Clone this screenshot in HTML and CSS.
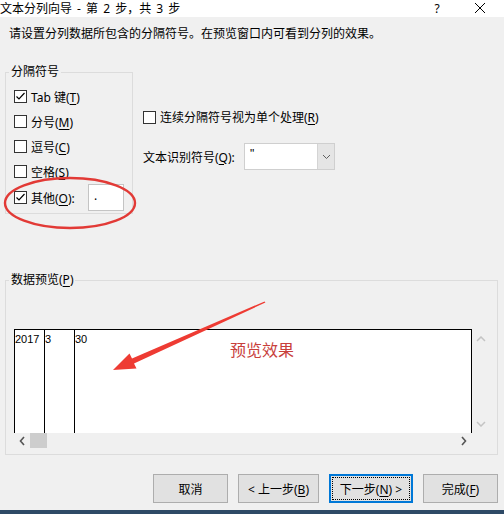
FILE: index.html
```html
<!DOCTYPE html>
<html lang="zh-CN">
<head>
    <meta charset="UTF-8">
    <title>文本分列向导</title>
    <link rel="stylesheet" href="styles.css">
</head>
<body>
    <div class="titlebar">
        <span class="title">文本分列向导 - 第 2 步，共 3 步</span>
        <span class="help">?</span>
        <svg class="close" width="12" height="12" viewBox="0 0 12 12"><path d="M1 1 L11 11 M11 1 L1 11" stroke="#000" stroke-width="1" fill="none"/></svg>
    </div>

    <p class="intro">请设置分列数据所包含的分隔符号。在预览窗口内可看到分列的效果。</p>

    <div class="options">
        <fieldset class="group delimiters">
            <legend>分隔符号</legend>
            <div class="rows">
                <div class="check-row"><span class="box checked"><svg width="11" height="11" viewBox="0 0 11 11"><path d="M1.5 5.5 L4 8 L9.5 2" stroke="#000" stroke-width="1.2" fill="none"/></svg></span><span>Tab 键(<u>T</u>)</span></div>
                <div class="check-row"><span class="box"></span><span>分号(<u>M</u>)</span></div>
                <div class="check-row"><span class="box"></span><span>逗号(<u>C</u>)</span></div>
                <div class="check-row"><span class="box"></span><span>空格(<u>S</u>)</span></div>
                <div class="check-row other"><span class="box checked"><svg width="11" height="11" viewBox="0 0 11 11"><path d="M1.5 5.5 L4 8 L9.5 2" stroke="#000" stroke-width="1.2" fill="none"/></svg></span><span class="other-label">其他(<u>O</u>):</span><span class="other-input">.</span></div>
            </div>
        </fieldset>

        <div class="side">
            <div class="check-row single"><span class="box"></span><span>连续分隔符号视为单个处理(<u>R</u>)</span></div>
            <div class="qualifier">
                <span class="q-label">文本识别符号(<u>Q</u>):</span>
                <div class="combo">
                    <span class="combo-value">"</span>
                    <span class="combo-btn"><svg width="9" height="6" viewBox="0 0 9 6"><path d="M1 1 L4.5 4.5 L8 1" stroke="#606060" stroke-width="1" fill="none"/></svg></span>
                </div>
            </div>
        </div>
    </div>

    <fieldset class="group preview-group">
        <legend>数据预览(<u>P</u>)</legend>
        <div class="preview-wrap">
            <div class="preview">
                <div class="sheet">
                    <div class="col">2017</div>
                    <div class="col">3</div>
                    <div class="col wide">30</div>
                </div>
                <div class="vscroll">
                    <svg width="10" height="6" viewBox="0 0 10 6"><path d="M1 5 L5 1 L9 5" stroke="#c4c4c4" stroke-width="1.5" fill="none"/></svg>
                    <svg width="10" height="6" viewBox="0 0 10 6"><path d="M1 1 L5 5 L9 1" stroke="#c4c4c4" stroke-width="1.5" fill="none"/></svg>
                </div>
                <div class="hscroll">
                    <span class="arrow"><svg width="6" height="10" viewBox="0 0 6 10"><path d="M5 1 L1.5 5 L5 9" stroke="#555" stroke-width="1.6" fill="none"/></svg></span>
                    <span class="thumb"></span>
                    <span class="track"></span>
                    <span class="arrow"><svg width="6" height="10" viewBox="0 0 6 10"><path d="M1 1 L4.5 5 L1 9" stroke="#555" stroke-width="1.6" fill="none"/></svg></span>
                </div>
                <div class="corner"></div>
            </div>
        </div>
    </fieldset>

    <div class="buttons">
        <button class="btn cancel">取消</button>
        <button class="btn back">&lt; 上一步(<u>B</u>)</button>
        <button class="btn next">下一步(<u>N</u>) &gt;</button>
        <button class="btn finish">完成(<u>F</u>)</button>
    </div>
    <div class="frame-line"></div>

    <!-- red markup drawn on top of the dialog -->
    <svg class="markup" width="504" height="514" viewBox="0 0 504 514">
        <ellipse cx="70" cy="203" rx="65" ry="25" stroke="#e23a36" stroke-width="2.4" fill="none"/>
        <polygon points="264.6,301.4 132,358.4 129.5,353.5 113,370 136.5,368.5 134,363.4 265.4,302.6" fill="#ee3b33"/>
    </svg>
    <span class="note">预览效果</span>
</body>
</html>
```

FILE: styles.css
```css
body {
    margin: 0;
    width: 504px;
    height: 514px;
    overflow: hidden;
    position: relative;
    background-color: #f0f0f0;
    font-family: "Noto Sans", "Noto Sans CJK SC", sans-serif;
    font-size: 12px;
    color: #000;
}

u {
    text-decoration-thickness: 1px;
    text-underline-offset: 2px;
}

.titlebar {
    height: 17px;
    box-sizing: border-box;
    padding-top: 1px;
    background-color: #fff;
    display: flex;
    align-items: flex-start;
    line-height: 15px;
}

.title {
    flex: 1;
    word-spacing: 2px;
}

.help {
    width: 8px;
    text-align: center;
    margin-right: 33px;
}

.close {
    margin-top: 1px;
    margin-right: 18px;
}

.intro {
    margin: 0;
    padding: 9px 0 0 9px;
    line-height: 16px;
}

.group {
    margin: 0 0 0 5px;
    padding: 0;
    min-width: 0;
    border: 1px solid #dcdcdc;
    box-sizing: border-box;
}

.group legend {
    margin-left: 3px;
    padding: 0 2px;
    line-height: 16px;
}

.options {
    display: flex;
    margin-top: 22px;
    height: 150px;
}

.delimiters {
    width: 128px;
}

.rows {
    padding: 4px 0 2px 8px;
}

.check-row {
    display: flex;
    align-items: center;
    gap: 4px;
    height: 25px;
    white-space: nowrap;
}

.check-row.other {
    height: 27px;
}

.box {
    width: 13px;
    height: 13px;
    box-sizing: border-box;
    border: 1px solid #333;
    background-color: #fff;
    display: flex;
    align-items: center;
    justify-content: center;
    flex-shrink: 0;
}

.other-label {
    width: 53px;
}

.other-input {
    width: 36px;
    height: 27px;
    box-sizing: border-box;
    border: 1px solid #c4c4c4;
    background-color: #fff;
    padding-left: 5px;
    line-height: 22px;
}

.side {
    margin-left: 10px;
    padding-top: 45px;
}

.check-row.single {
    height: 16px;
}

.qualifier {
    display: flex;
    align-items: center;
    height: 27px;
    margin-top: 18px;
}

.q-label {
    width: 101px;
    white-space: nowrap;
}

.combo {
    width: 91px;
    height: 27px;
    box-sizing: border-box;
    border: 1px solid #cfcfcf;
    background-color: #fff;
    display: flex;
}

.combo-value {
    flex: 1;
    padding-left: 5px;
    line-height: 20px;
    font-family: "Liberation Sans", sans-serif;
}

.combo-btn {
    width: 16px;
    background-color: #e5e5e5;
    border-left: 1px solid #d4d4d4;
    display: flex;
    align-items: center;
    justify-content: center;
}

.preview-group {
    width: 493px;
    margin-top: 58px;
}

.preview-wrap {
    padding: 41px 0 6px 8px;
}

.preview {
    display: grid;
    grid-template-columns: 458px 16px;
    grid-template-rows: 104px 15px;
}

.sheet {
    background-color: #fff;
    border: 1px solid #000;
    border-bottom: none;
    display: flex;
    font-family: "Liberation Sans", sans-serif;
    font-size: 11px;
    line-height: 14px;
}

.col {
    width: 30px;
    box-sizing: border-box;
    border-right: 1px solid #000;
    padding-top: 2px;
}

.col.wide {
    flex: 1;
    border-right: none;
}

.vscroll {
    display: flex;
    flex-direction: column;
    justify-content: space-between;
    align-items: center;
    padding: 7px 0 6px 1px;
}

.hscroll {
    display: flex;
    align-items: stretch;
}

.arrow {
    width: 16px;
    display: flex;
    align-items: center;
    justify-content: center;
}

.thumb {
    width: 17px;
    background-color: #cdcdcd;
}

.track {
    flex: 1;
}

.buttons {
    display: flex;
    justify-content: flex-end;
    gap: 10px;
    margin-top: 19px;
    padding-right: 6px;
}

.btn {
    height: 29px;
    padding: 0;
    background-color: #e1e1e1;
    border: 1px solid #adadad;
    font-family: "Noto Sans", "Noto Sans CJK SC", sans-serif;
    font-size: 12px;
    color: #000;
}

.cancel,
.finish {
    width: 75px;
}

.back {
    width: 81px;
}

.next {
    width: 84px;
    border: 2px solid #0078d7;
    outline: 1px dotted #000;
    outline-offset: -4px;
}

.frame-line {
    height: 4px;
    margin-top: 7px;
    background-color: #2e4a66;
}

.markup {
    position: absolute;
    top: 0;
    left: 0;
    pointer-events: none;
}

.note {
    position: absolute;
    left: 230px;
    top: 340px;
    font-size: 16px;
    line-height: 20px;
    color: #c8403b;
}
```
